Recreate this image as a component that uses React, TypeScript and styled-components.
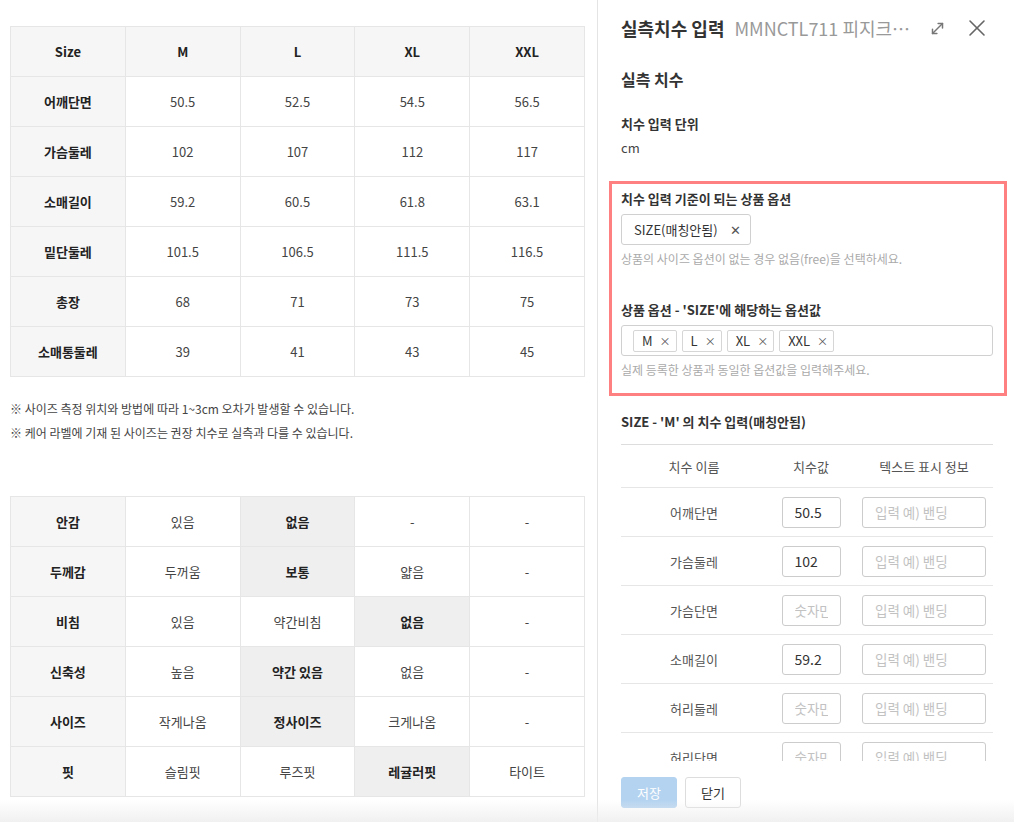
import React from "react";
import styled, { createGlobalStyle } from "styled-components";

const GlobalStyle = createGlobalStyle`
  html, body { margin: 0; padding: 0; background: #fff; }
  body {
    font-family: "Noto Sans CJK KR", "Noto Sans", sans-serif;
    color: #333;
    overflow: hidden;
  }
  * { box-sizing: border-box; }
`;

const Page = styled.div`
  display: flex;
  width: 1014px;
  height: 822px;
  position: relative;
  overflow: hidden;
`;

const BottomShade = styled.div`
  position: absolute;
  left: 0;
  right: 0;
  bottom: 0;
  height: 22px;
  background: linear-gradient(to bottom, rgba(240, 240, 240, 0), rgba(238, 238, 238, 0.85));
  pointer-events: none;
`;

const Left = styled.div`
  width: 597px;
  flex: none;
  padding: 26px 12px 0 10px;
`;

const Table = styled.table`
  width: 575px;
  border-collapse: collapse;
  table-layout: fixed;
  font-size: 13px;
  color: #333;
`;

const Td = styled.td<{ $head?: boolean; $hl?: boolean }>`
  height: 50px;
  border: 1px solid #e6e6e6;
  text-align: center;
  vertical-align: middle;
  padding: 0;
  font-weight: ${(p) => (p.$head || p.$hl ? 700 : 400)};
  color: ${(p) => (p.$head || p.$hl ? "#222" : "#444")};
  background: ${(p) => (p.$hl ? "#efefef" : p.$head ? "#f6f6f6" : "#fff")};
`;

const Notes = styled.div`
  margin: 20px 0 51px;
  font-size: 12px;
  line-height: 24px;
  color: #444;
`;

const Drawer = styled.div`
  flex: 1;
  border-left: 1px solid #e4e4e4;
  display: flex;
  flex-direction: column;
  height: 822px;
`;

const Header = styled.div`
  display: flex;
  align-items: center;
  height: 56px;
  padding: 0 28px 0 23px;
  gap: 10px;
`;

const Title = styled.div`
  font-size: 18px;
  font-weight: 700;
  color: #333;
  white-space: nowrap;
`;

const Sub = styled.div`
  font-size: 18px;
  color: #999;
  white-space: nowrap;
  overflow: hidden;
  text-overflow: ellipsis;
  flex: 1;
  min-width: 0;
  max-width: 176px;
`;

const IconBtn = styled.button`
  border: 0;
  background: none;
  padding: 0;
  display: flex;
  align-items: center;
  justify-content: center;
  color: #777;
  cursor: pointer;
`;

const Icons = styled.div`
  display: flex;
  align-items: center;
  gap: 23px;
  margin-left: auto;
`;

const Body = styled.div`
  flex: 1;
  overflow: hidden;
  padding: 8px 21px 0 23px;
`;

const Section = styled.div`
  font-size: 16px;
  font-weight: 700;
  color: #333;
  line-height: 30px;
  margin-bottom: 20px;
`;

const Label = styled.div`
  font-size: 13px;
  font-weight: 700;
  color: #333;
  line-height: 20px;
`;

const Value = styled.div`
  font-size: 13px;
  color: #444;
  line-height: 20px;
  margin: 4px 0 23px;
`;

const Highlight = styled.div`
  margin: 0 -14px 0 -12px;
  border: 3px solid #ff8080;
  padding: 5px 11px 14px 9px;
`;

const SelectBox = styled.div`
  display: inline-flex;
  align-items: center;
  gap: 12px;
  height: 31px;
  margin-top: 5px;
  padding: 0 9px 0 12px;
  border: 1px solid #d0d0d0;
  border-radius: 3px;
  font-size: 13px;
  color: #333;
`;

const Help = styled.div`
  font-size: 12px;
  color: #aaa;
  line-height: 18px;
  margin-top: 5px;
`;

const Spacer = styled.div<{ $h: number }>`
  height: ${(p) => p.$h}px;
`;

const MultiInput = styled.div`
  display: flex;
  align-items: center;
  gap: 5px;
  height: 31px;
  margin-top: 5px;
  padding: 0 11px;
  border: 1px solid #d0d0d0;
  border-radius: 3px;
`;

const Tag = styled.span`
  display: inline-flex;
  align-items: center;
  gap: 7px;
  height: 22px;
  padding: 0 5px 0 8px;
  border: 1px solid #d6d6d6;
  border-radius: 2px;
  font-size: 13px;
  color: #333;
`;

const TagX = styled.span<{ $size?: number }>`
  font-size: ${(p) => p.$size ?? 11}px;
  color: #555;
`;

const SizeHead = styled.div`
  font-size: 13px;
  font-weight: 700;
  color: #333;
  line-height: 20px;
  margin-top: 16px;
  margin-bottom: 12px;
`;

const Grid = styled.div`
  border-top: 1px solid #ddd;
`;

const Row = styled.div<{ $head?: boolean }>`
  display: grid;
  grid-template-columns: 146px 88px 1fr;
  align-items: center;
  height: ${(p) => (p.$head ? 43 : 49)}px;
  border-bottom: 1px solid #e6e6e6;
  font-size: 13px;
  color: #555;
`;

const Cell = styled.div`
  display: flex;
  justify-content: center;
`;

const Input = styled.input<{ $w: number }>`
  width: ${(p) => p.$w}px;
  height: 31px;
  border: 1px solid #ccc;
  border-radius: 3px;
  padding: 0 12px;
  font-family: inherit;
  font-size: 14px;
  color: #333;
  background: #fff;
  outline: none;
  &::placeholder {
    color: #c2c2c2;
    font-size: 13.5px;
  }
`;

const Footer = styled.div`
  display: flex;
  gap: 8px;
  padding: 16px 23px 14px;
`;

const Button = styled.button<{ $primary?: boolean }>`
  width: 56px;
  height: 31px;
  border-radius: 3px;
  font-family: inherit;
  font-size: 13px;
  border: 1px solid ${(p) => (p.$primary ? "#b4d3f0" : "#ddd")};
  background: ${(p) => (p.$primary ? "#b4d3f0" : "#fff")};
  color: ${(p) => (p.$primary ? "#fff" : "#333")};
`;

const sizeRows = [
  ["어깨단면", "50.5", "52.5", "54.5", "56.5"],
  ["가슴둘레", "102", "107", "112", "117"],
  ["소매길이", "59.2", "60.5", "61.8", "63.1"],
  ["밑단둘레", "101.5", "106.5", "111.5", "116.5"],
  ["총장", "68", "71", "73", "75"],
  ["소매통둘레", "39", "41", "43", "45"],
];

const infoRows: { cells: string[]; hl: number }[] = [
  { cells: ["안감", "있음", "없음", "-", "-"], hl: 2 },
  { cells: ["두께감", "두꺼움", "보통", "얇음", "-"], hl: 2 },
  { cells: ["비침", "있음", "약간비침", "없음", "-"], hl: 3 },
  { cells: ["신축성", "높음", "약간 있음", "없음", "-"], hl: 2 },
  { cells: ["사이즈", "작게나옴", "정사이즈", "크게나옴", "-"], hl: 2 },
  { cells: ["핏", "슬림핏", "루즈핏", "레귤러핏", "타이트"], hl: 3 },
];

const measureRows = [
  { name: "어깨단면", v: "50.5" },
  { name: "가슴둘레", v: "102" },
  { name: "가슴단면", v: "" },
  { name: "소매길이", v: "59.2" },
  { name: "허리둘레", v: "" },
  { name: "허리단면", v: "" },
  { name: "엉덩이둘레", v: "" },
];

export default function App() {
  return (
    <Page>
      <GlobalStyle />
      <Left>
        <Table>
          <tbody>
            <tr>
              {["Size", "M", "L", "XL", "XXL"].map((h) => (
                <Td key={h} $head>
                  {h}
                </Td>
              ))}
            </tr>
            {sizeRows.map((r) => (
              <tr key={r[0]}>
                {r.map((c, i) => (
                  <Td key={i} $head={i === 0}>
                    {c}
                  </Td>
                ))}
              </tr>
            ))}
          </tbody>
        </Table>
        <Notes>
          <div>※ 사이즈 측정 위치와 방법에 따라 1~3cm 오차가 발생할 수 있습니다.</div>
          <div>※ 케어 라벨에 기재 된 사이즈는 권장 치수로 실측과 다를 수 있습니다.</div>
        </Notes>
        <Table>
          <tbody>
            {infoRows.map((r) => (
              <tr key={r.cells[0]}>
                {r.cells.map((c, i) => (
                  <Td key={i} $head={i === 0} $hl={i === r.hl}>
                    {c}
                  </Td>
                ))}
              </tr>
            ))}
          </tbody>
        </Table>
      </Left>
      <Drawer>
        <Header>
          <Title>실측치수 입력</Title>
          <Sub>MMNCTL711 피지크 라운드 티셔츠</Sub>
          <Icons>
            <IconBtn aria-label="expand">
              <svg width="15" height="15" viewBox="0 0 24 24" fill="none" stroke="#777" strokeWidth="2.4" strokeLinecap="round" strokeLinejoin="round">
                <polyline points="13 4 20 4 20 11" />
                <polyline points="11 20 4 20 4 13" />
                <line x1="20" y1="4" x2="4" y2="20" />
              </svg>
            </IconBtn>
            <IconBtn aria-label="close">
              <svg width="18" height="18" viewBox="0 0 18 18" fill="none" stroke="#666" strokeWidth="1.6" strokeLinecap="round">
                <line x1="2" y1="2" x2="16" y2="16" />
                <line x1="16" y1="2" x2="2" y2="16" />
              </svg>
            </IconBtn>
          </Icons>
        </Header>
        <Body>
          <Section>실측 치수</Section>
          <Label>치수 입력 단위</Label>
          <Value>cm</Value>
          <Highlight>
            <Label>치수 입력 기준이 되는 상품 옵션</Label>
            <SelectBox>
              SIZE(매칭안됨)
              <TagX $size={13}>✕</TagX>
            </SelectBox>
            <Help>상품의 사이즈 옵션이 없는 경우 없음(free)을 선택하세요.</Help>
            <Spacer $h={32} />
            <Label>상품 옵션 - 'SIZE'에 해당하는 옵션값</Label>
            <MultiInput>
              {["M", "L", "XL", "XXL"].map((t) => (
                <Tag key={t}>
                  {t}
                  <TagX>×</TagX>
                </Tag>
              ))}
            </MultiInput>
            <Help>실제 등록한 상품과 동일한 옵션값을 입력해주세요.</Help>
          </Highlight>
          <SizeHead>SIZE - 'M' 의 치수 입력(매칭안됨)</SizeHead>
          <Grid>
            <Row $head>
              <Cell>치수 이름</Cell>
              <Cell>치수값</Cell>
              <Cell>텍스트 표시 정보</Cell>
            </Row>
            {measureRows.map((r) => (
              <Row key={r.name}>
                <Cell>{r.name}</Cell>
                <Cell>
                  <Input $w={59} defaultValue={r.v} placeholder="숫자만" />
                </Cell>
                <Cell>
                  <Input $w={124} placeholder="입력 예) 밴딩" />
                </Cell>
              </Row>
            ))}
          </Grid>
        </Body>
        <Footer>
          <Button $primary>저장</Button>
          <Button>닫기</Button>
        </Footer>
      </Drawer>
      <BottomShade />
    </Page>
  );
}
